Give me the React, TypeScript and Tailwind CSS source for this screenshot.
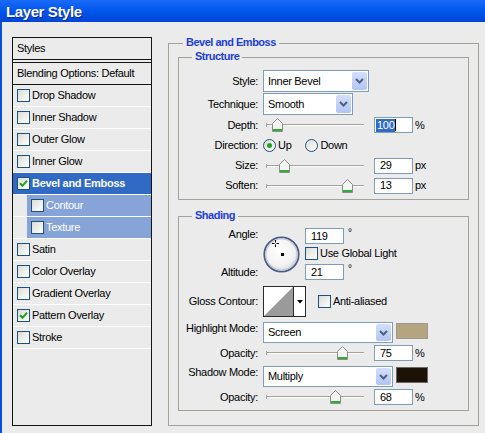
import clsx from "clsx";

const rows = [
  { label: "Drop Shadow" },
  { label: "Inner Shadow" },
  { label: "Outer Glow" },
  { label: "Inner Glow" },
  { label: "Bevel and Emboss", on: true, selected: true },
  { label: "Contour", sub: true },
  { label: "Texture", sub: true },
  { label: "Satin" },
  { label: "Color Overlay" },
  { label: "Gradient Overlay" },
  { label: "Pattern Overlay", on: true },
  { label: "Stroke" },
];

function Check({ on }: { on?: boolean }) {
  return (
    <span className="w-[13px] h-[13px] shrink-0 border border-[#1c5180] bg-linear-to-br from-[#dcdcd5] to-white flex items-center justify-center">
      {on && (
        <svg width="9" height="9" viewBox="0 0 9 9">
          <path d="M1 4.2 L3.5 6.8 L8 1.6" stroke="#21a121" strokeWidth="2" fill="none" />
        </svg>
      )}
    </span>
  );
}

function Radio({ on }: { on?: boolean }) {
  return (
    <span className="w-[13px] h-[13px] shrink-0 rounded-full border border-[#1c5180] bg-linear-to-br from-[#dcdcd5] to-white flex items-center justify-center">
      {on && <span className="w-[5px] h-[5px] rounded-full bg-[#21a121]" />}
    </span>
  );
}

function Select({ value, wide }: { value: string; wide?: boolean }) {
  return (
    <div
      className={clsx(
        "h-full border border-[#7f9db9] bg-white flex items-center justify-between p-px",
        wide ? "w-[130px]" : "w-[106px]"
      )}
    >
      <span className="pl-[3px]">{value}</span>
      <span className="w-[15px] h-full rounded-[2px] bg-linear-to-b from-[#d3defa] to-[#b1c5f3] flex items-center justify-center">
        <svg width="9" height="6" viewBox="0 0 9 6">
          <path d="M1 1 L4.5 4.5 L8 1" stroke="#4d6185" strokeWidth="2" fill="none" />
        </svg>
      </span>
    </div>
  );
}

function Slider({ at }: { at: number }) {
  // at = x of thumb centre in page coords, slider box starts at 263
  return (
    <div className="relative w-[111px] h-[14px] shrink-0">
      <div className="absolute left-[4px] top-[6px] w-[97px] h-[2px] border-t border-[#a3a39b] border-b border-b-white" />
      <div className="absolute left-[3px] top-[5px] w-[2px] h-[4px] border-l border-[#a3a39b]" />
      <svg className="absolute top-0" style={{ left: at - 263 - 5 }} width="11" height="14" viewBox="0 0 11 14">
        <path d="M0.5 5.5 L5.5 0.5 L10.5 5.5 V13.5 H0.5 Z" fill="#f4f4f0" stroke="#8d8d88" />
        <rect x="1" y="11" width="9" height="2" fill="#2fae3a" />
      </svg>
    </div>
  );
}

function Num({ v }: { v: string }) {
  return (
    <div className="w-[39px] h-[16px] shrink-0 border border-[#7f9db9] bg-white flex items-center pl-[5px]">
      {v}
    </div>
  );
}

function Label({ children }: { children: string }) {
  return <span className="w-[79px] shrink-0 text-right mr-[5px]">{children}</span>;
}

function Dial() {
  return (
    <svg width="37" height="37" viewBox="0 0 37 37" className="mt-[9px] shrink-0">
      <defs>
        <radialGradient id="dg" cx="45%" cy="40%" r="60%">
          <stop offset="0%" stopColor="#ffffff" />
          <stop offset="70%" stopColor="#f2f2f2" />
          <stop offset="100%" stopColor="#d8d8d8" />
        </radialGradient>
      </defs>
      <circle cx="18.5" cy="18.5" r="17.2" fill="url(#dg)" stroke="#4d5c84" strokeWidth="1.8" />
      <circle cx="18.5" cy="18.5" r="15.6" fill="none" stroke="#c2c9da" strokeWidth="1.2" />
      <rect x="18" y="17" width="3" height="3" fill="#000" />
      <path d="M9 7.5 H11.5 M13.5 7.5 H16 M12.5 4 V6.5 M12.5 8.5 V11" stroke="#000" strokeWidth="1" />
    </svg>
  );
}

export default function App() {
  return (
    <div className="w-[485px] h-[433px] overflow-hidden bg-[#ebebeb] text-[11px] leading-[13px] tracking-[-0.3px] text-black font-['Liberation_Sans',Arial,sans-serif]">
      <div className="h-[22px] bg-linear-to-b from-[#1b6af9] via-[#0056ec] to-[#0045d6] flex items-center pl-[6px]">
        <span className="text-white font-bold text-[15px] tracking-[-0.4px] [text-shadow:1px_1px_0_#0b2a8c]">
          Layer Style
        </span>
      </div>

      <div className="h-[411px] flex items-start border-l-2 border-[#0a4fe0]">
        {/* styles list */}
        <div className="ml-[10px] mt-[15px] w-[140px] h-[389px] border border-[#151515] flex flex-col">
          <div className="h-[21px] flex items-center pl-[4px]">Styles</div>
          <div className="h-[4px] border-y border-[#151515]" />
          <div className="h-[22px] flex items-center pl-[4px] border-b border-[#151515]">Blending Options: Default</div>
          {rows.map((r) =>
            r.sub ? (
              <div key={r.label} className="h-[22px] flex border-b border-white">
                <div className="w-[14px]" />
                <div className="flex-1 flex items-center gap-[2px] pl-[4px] bg-[#87a4d8] text-white">
                  <Check />
                  <span>{r.label}</span>
                </div>
              </div>
            ) : (
              <div
                key={r.label}
                className={clsx(
                  "h-[22px] flex items-center gap-[2px] pl-[4px] border-b border-white",
                  r.selected && "bg-[#316ac5] text-white font-bold"
                )}
              >
                <Check on={r.on} />
                <span>{r.label}</span>
              </div>
            )
          )}
        </div>

        {/* Bevel and Emboss group */}
        <div className="relative ml-[16px] mt-[21px] w-[311px] h-[383px] border border-[#a2a29c] px-[9px] pt-[13px]">
          <span className="absolute left-[14px] top-[-8px] px-[3px] bg-[#ebebeb] text-[#1c3fd6] font-bold tracking-[-0.5px]">
            Bevel and Emboss
          </span>

          {/* Structure */}
          <div className="relative h-[143px] border border-[#a2a29c] pt-[12px]">
            <span className="absolute left-[13px] top-[-8px] px-[3px] bg-[#ebebeb] text-[#1c3fd6] font-bold tracking-[-0.5px]">
              Structure
            </span>
            <div className="h-[22px] flex items-center">
              <Label>Style:</Label>
              <Select value="Inner Bevel" />
            </div>
            <div className="mt-px h-[22px] flex items-center">
              <Label>Technique:</Label>
              <div className="w-[90px] h-full">
                <div className="w-[90px] h-full border border-[#7f9db9] bg-white flex items-center justify-between p-px">
                  <span className="pl-[3px]">Smooth</span>
                  <span className="w-[15px] h-full rounded-[2px] bg-linear-to-b from-[#d3defa] to-[#b1c5f3] flex items-center justify-center">
                    <svg width="9" height="6" viewBox="0 0 9 6">
                      <path d="M1 1 L4.5 4.5 L8 1" stroke="#4d6185" strokeWidth="2" fill="none" />
                    </svg>
                  </span>
                </div>
              </div>
            </div>
            <div className="mt-px h-[18px] flex items-center">
              <Label>Depth:</Label>
              <Slider at={277} />
              <div className="w-[39px] h-[16px] shrink-0 border border-[#7f9db9] bg-white flex items-center pl-px">
                <span className="bg-[#316ac5] text-white px-px">100</span>
                <span className="w-px h-[12px] bg-black" />
              </div>
              <span className="ml-[2px]">%</span>
            </div>
            <div className="h-[23px] flex items-center">
              <Label>Direction:</Label>
              <Radio on />
              <span className="ml-[2px]">Up</span>
              <span className="ml-[14px]">
                <Radio />
              </span>
              <span className="ml-[2px]">Down</span>
            </div>
            <div className="h-[17px] flex items-center">
              <Label>Size:</Label>
              <Slider at={284} />
              <Num v="29" />
              <span className="ml-[2px]">px</span>
            </div>
            <div className="mt-[3px] h-[17px] flex items-center">
              <Label>Soften:</Label>
              <Slider at={347} />
              <Num v="13" />
              <span className="ml-[2px]">px</span>
            </div>
          </div>

          {/* Shading */}
          <div className="relative mt-[16px] h-[195px] border border-[#a2a29c] pt-[10px]">
            <span className="absolute left-[13px] top-[-8px] px-[3px] bg-[#ebebeb] text-[#1c3fd6] font-bold tracking-[-0.5px]">
              Shading
            </span>
            <div className="h-[53px] flex items-start">
              <div className="w-[79px] mr-[5px] flex flex-col items-end">
                <span className="h-[14px] flex items-center">Angle:</span>
                <span className="mt-[24px] h-[14px] flex items-center">Altitude:</span>
              </div>
              <Dial />
              <div className="ml-[5px] flex flex-col">
                <div className="mt-px flex items-start">
                  <Num v="119" />
                  <span className="ml-[4px] text-[10px] leading-[10px]">°</span>
                </div>
                <div className="mt-[3px] h-[13px] flex items-center">
                  <Check />
                  <span className="ml-[2px]">Use Global Light</span>
                </div>
                <div className="mt-[4px] flex items-start">
                  <Num v="21" />
                  <span className="ml-[4px] text-[10px] leading-[10px]">°</span>
                </div>
              </div>
            </div>

            <div className="mt-[6px] h-[31px] flex items-center">
              <Label>Gloss Contour:</Label>
              <div className="w-[43px] h-[31px] shrink-0 border border-[#2a2a2a] bg-white flex">
                <svg width="29" height="29" viewBox="0 0 29 29" className="shrink-0">
                  <path d="M0 29 L29 0 V29 Z" fill="#9a9a9a" />
                </svg>
                <div className="flex-1 border-l border-[#2a2a2a] flex items-center justify-center">
                  <svg width="6" height="4" viewBox="0 0 6 4">
                    <path d="M0 0 H6 L3 3.5 Z" fill="#000" />
                  </svg>
                </div>
              </div>
              <span className="ml-[12px]">
                <Check />
              </span>
              <span className="ml-[2px]">Anti-aliased</span>
            </div>

            <div className="mt-[5px] h-[21px] flex items-start">
              <Label>Highlight Mode:</Label>
              <div className="h-[21px] flex items-center">
                <Select value="Screen" wide />
              </div>
              <div className="ml-[3px] mt-px w-[32px] h-[16px] border border-[#9a9a92] bg-[#b5a57f]" />
            </div>
            <div className="mt-px h-[18px] flex items-center">
              <Label>Opacity:</Label>
              <Slider at={342} />
              <Num v="75" />
              <span className="ml-[2px]">%</span>
            </div>

            <div className="mt-[4px] h-[21px] flex items-start">
              <Label>Shadow Mode:</Label>
              <div className="h-[21px] flex items-center">
                <Select value="Multiply" wide />
              </div>
              <div className="ml-[3px] mt-px w-[32px] h-[16px] border border-[#6a6a62] bg-[#1c1207]" />
            </div>
            <div className="mt-px h-[18px] flex items-center">
              <Label>Opacity:</Label>
              <Slider at={335} />
              <Num v="68" />
              <span className="ml-[2px]">%</span>
            </div>
          </div>
        </div>
      </div>
    </div>
  );
}
